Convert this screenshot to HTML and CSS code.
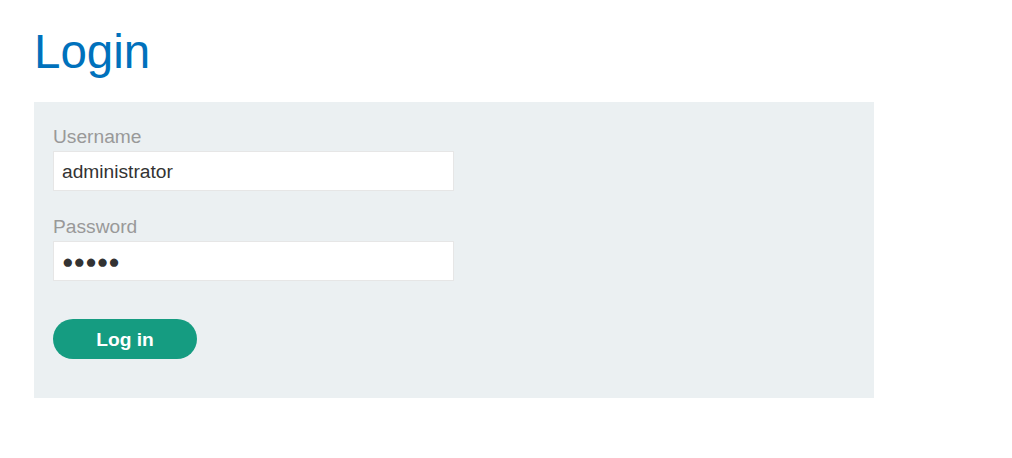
FILE: index.html
```html
<!DOCTYPE html>
<html>
<head>
<meta charset="utf-8">
<link rel="stylesheet" href="styles.css">
</head>
<body>
<div class="page">
  <h1 class="title">Login</h1>
  <form class="panel">
    <label class="label" for="u">Username</label>
    <input class="field" id="u" type="text" value="administrator">
    <label class="label label-second" for="p">Password</label>
    <input class="field" id="p" type="text" value="●●●●●" readonly>
    <button class="btn" type="button">Log in</button>
  </form>
</div>
</body>
</html>
```
FILE: styles.css
```css
html, body {
  margin: 0;
  padding: 0;
  background: #ffffff;
}
.page {
  padding: 0 34px;
  font-family: "Liberation Sans", Arial, sans-serif;
}
.title {
  margin: 0;
  padding-top: 25px;
  height: 102px;
  box-sizing: border-box;
  font-size: 47.5px;
  line-height: 54px;
  font-weight: normal;
  color: #0071bc;
}
.panel {
  width: 840px;
  box-sizing: border-box;
  background: #ebf0f2;
  padding: 24px 19px 39px;
  display: flex;
  flex-direction: column;
  align-items: flex-start;
}
.label {
  font-size: 19.2px;
  line-height: 22px;
  color: #999999;
  margin-bottom: 3px;
}
.label-second {
  margin-top: 25px;
}
.field {
  width: 401px;
  height: 40px;
  box-sizing: border-box;
  border: 1px solid #e6e6e6;
  background: #ffffff;
  padding: 1px 8px 0;
  font-family: "Liberation Sans", Arial, sans-serif;
  font-size: 19.2px;
  color: #333333;
  outline: none;
  margin: 0;
}
.btn {
  margin-top: 38px;
  width: 144px;
  height: 40px;
  border: none;
  border-radius: 20px;
  background: #159c81;
  color: #ffffff;
  font-family: "Liberation Sans", Arial, sans-serif;
  font-size: 19.2px;
  font-weight: bold;
  padding: 1px 0 0;
  cursor: pointer;
}
```
